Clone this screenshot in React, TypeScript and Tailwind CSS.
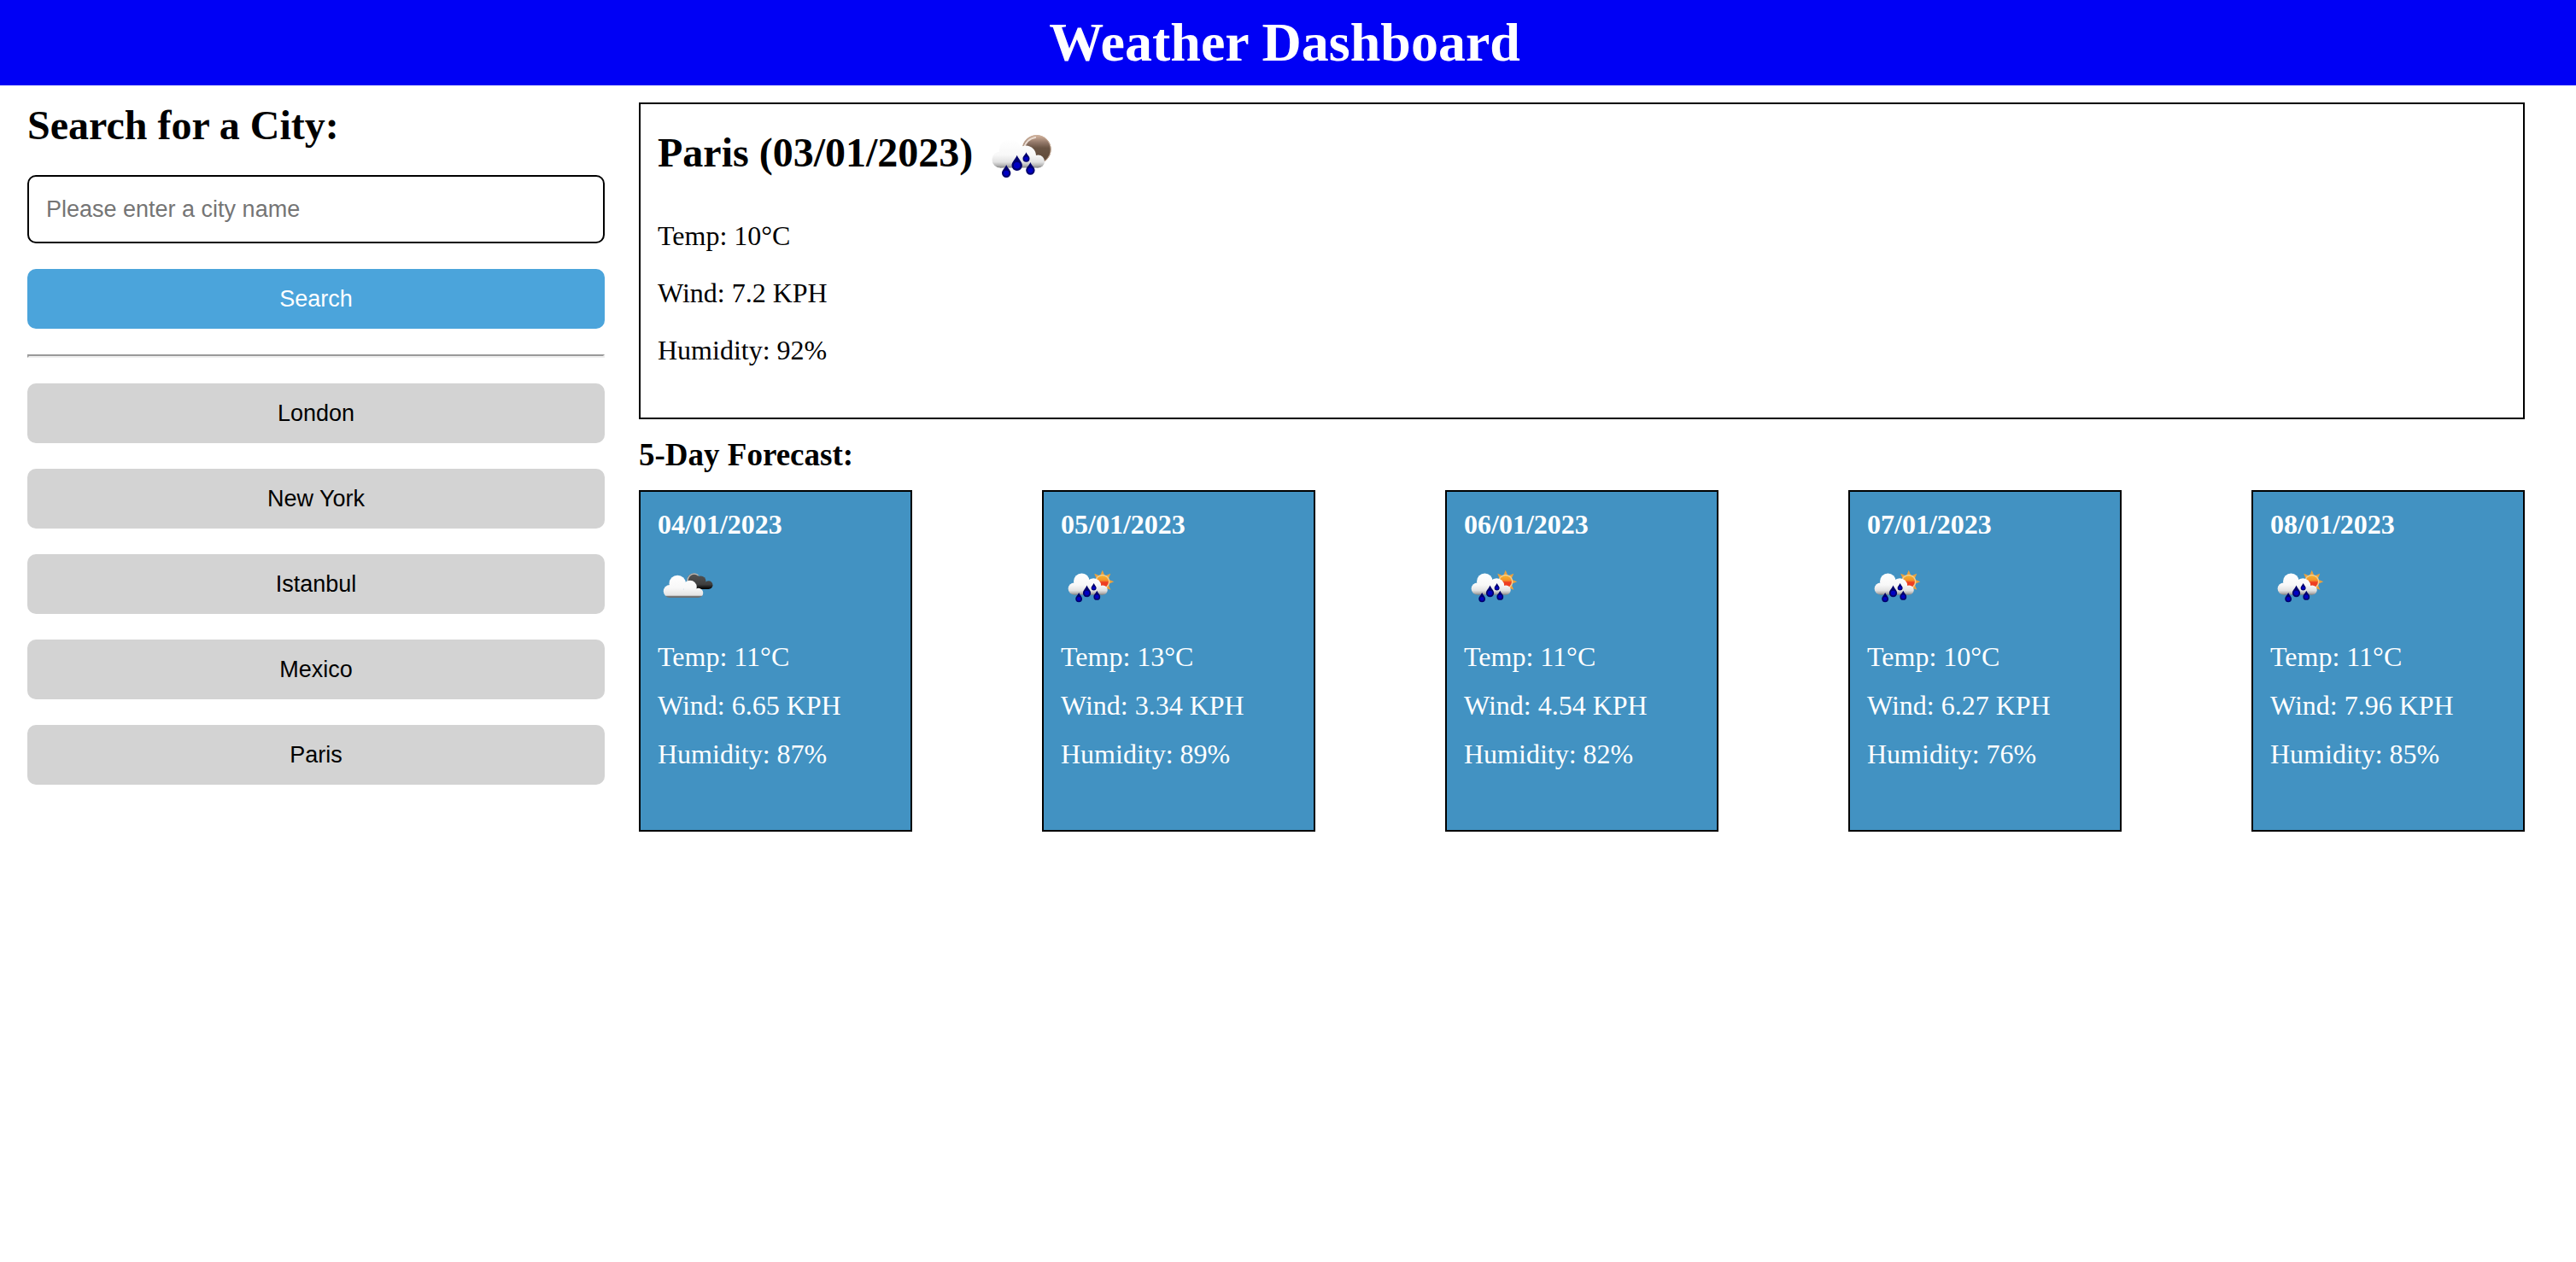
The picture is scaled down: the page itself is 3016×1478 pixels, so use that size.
import React from "react";

type IconKind = "rain-night" | "rain-day" | "clouds";

const HISTORY = ["London", "New York", "Istanbul", "Mexico", "Paris"];

const FORECAST: { date: string; icon: IconKind; temp: string; wind: string; humidity: string }[] = [
  { date: "04/01/2023", icon: "clouds", temp: "11", wind: "6.65", humidity: "87" },
  { date: "05/01/2023", icon: "rain-day", temp: "13", wind: "3.34", humidity: "89" },
  { date: "06/01/2023", icon: "rain-day", temp: "11", wind: "4.54", humidity: "82" },
  { date: "07/01/2023", icon: "rain-day", temp: "10", wind: "6.27", humidity: "76" },
  { date: "08/01/2023", icon: "rain-day", temp: "11", wind: "7.96", humidity: "85" },
];

function Drop({ x, top, bottom, r }: { x: number; top: number; bottom: number; r: number }) {
  const cy = bottom - r;
  const d = `M${x} ${top}C${x + r * 0.3} ${top + r * 0.8} ${x + r} ${cy - r * 0.7} ${x + r} ${cy}A${r} ${r} 0 0 1 ${x - r} ${cy}C${x - r} ${cy - r * 0.7} ${x - r * 0.3} ${top + r * 0.8} ${x} ${top}Z`;
  return (
    <g>
      <path d={d} fill="#00006c" />
      <circle cx={x} cy={cy} r={r * 0.6} fill="#0000c4" />
    </g>
  );
}

function WeatherIcon({ kind, className }: { kind: IconKind; className: string }) {
  const id = React.useId();
  const url = (name: string) => `url(#${id}${name})`;
  const rays = [0, 45, 90, 135, 180, 225, 270, 315];
  return (
    <svg className={className} viewBox={kind === "rain-night" ? "0 0 100 92" : "3 0 100 92"} aria-hidden="true">
      <defs>
        <linearGradient id={`${id}rain`} gradientUnits="userSpaceOnUse" x1="0" y1="30" x2="0" y2="63.5">
          <stop offset="0" stopColor="#ffffff" />
          <stop offset="0.55" stopColor="#f8f8f8" />
          <stop offset="0.8" stopColor="#e2e2e2" />
          <stop offset="0.92" stopColor="#b4b4b4" />
          <stop offset="1" stopColor="#858585" />
        </linearGradient>
        <linearGradient id={`${id}white`} gradientUnits="userSpaceOnUse" x1="0" y1="33" x2="0" y2="68.5">
          <stop offset="0" stopColor="#ffffff" />
          <stop offset="0.55" stopColor="#f8f8f8" />
          <stop offset="0.88" stopColor="#e4e4e4" />
          <stop offset="0.93" stopColor="#777777" />
          <stop offset="1" stopColor="#666666" />
        </linearGradient>
        <linearGradient id={`${id}dark`} gradientUnits="userSpaceOnUse" x1="0" y1="29" x2="0" y2="55">
          <stop offset="0" stopColor="#555555" />
          <stop offset="0.7" stopColor="#3f3f3f" />
          <stop offset="0.9" stopColor="#111111" />
          <stop offset="1" stopColor="#000000" />
        </linearGradient>
        <linearGradient id={`${id}moon`} x1="0" y1="0" x2="0" y2="1">
          <stop offset="0" stopColor="#d5b59e" />
          <stop offset="0.25" stopColor="#94796a" />
          <stop offset="0.45" stopColor="#6a5444" />
          <stop offset="1" stopColor="#5c4737" />
        </linearGradient>
        <linearGradient id={`${id}sun`} x1="0" y1="0" x2="0" y2="1">
          <stop offset="0" stopColor="#f7b52c" />
          <stop offset="0.4" stopColor="#f5902a" />
          <stop offset="0.55" stopColor="#ee3f22" />
          <stop offset="1" stopColor="#ef3b20" />
        </linearGradient>
      </defs>
      {kind === "clouds" && (
        <>
          <g fill={url("dark")}>
            <circle cx="59" cy="39.500" r="9.500" />
            <circle cx="70" cy="42.500" r="8.500" />
            <circle cx="82.500" cy="48.200" r="6.500" />
            <rect x="50" y="44" width="32.500" height="10.700" />
          </g>
          <path d="M49.500 42C50 35.500 54.500 30.500 60 30.500C62.500 30.500 65 31.500 66.500 33.500" fill="none" stroke="#b9b4ae" strokeWidth="2" />
          <g fill={url("white")}>
            <circle cx="34" cy="46" r="13" />
            <circle cx="22" cy="58" r="10" />
            <circle cx="53.500" cy="51.500" r="10.500" />
            <circle cx="66.500" cy="60.500" r="7.500" />
            <rect x="22" y="55" width="44.500" height="13" />
          </g>
        </>
      )}
      {kind === "rain-night" && (
        <>
          <circle cx="66.700" cy="42" r="16.800" fill={url("moon")} />
          <path d="M51.500 42C53 34 58.500 29 66 27.800" fill="none" stroke="#eadbd0" strokeWidth="2" />
          <circle cx="66.700" cy="42" r="16.500" fill="none" stroke="#c9ad98" strokeWidth="1" />
        </>
      )}
      {kind === "rain-day" && (
        <>
          {rays.map((angle) => (
            <path key={angle} d="M64 34.500L68 25L72 34.500Z" fill="#eba13c" transform={`rotate(${angle} 68 43)`} />
          ))}
          <circle cx="68" cy="43" r="11.500" fill="#f3cf94" />
          <circle cx="68" cy="43" r="9.500" fill={url("sun")} />
        </>
      )}
      {kind !== "clouds" && (
        <>
          <g fill={url("rain")}>
            <circle cx="35.500" cy="42.500" r="12.500" />
            <circle cx="24" cy="54" r="9.500" />
            <circle cx="54" cy="49.500" r="12" />
            <circle cx="68.500" cy="56" r="7.500" />
            <rect x="24" y="50" width="44.500" height="13.500" />
          </g>
          <Drop x={43.7} top={48.7} bottom={67} r={6.2} />
          <Drop x={54.5} top={45.3} bottom={56.8} r={4} />
          <Drop x={31.2} top={60} bottom={75} r={5.2} />
          <Drop x={59.4} top={57} bottom={71.8} r={5.2} />
        </>
      )}
    </svg>
  );
}

export default function App() {
  return (
    <div className="min-h-screen bg-white font-['Liberation_Serif',serif] text-[32px] text-black">
      <header className="bg-[#0000f5] py-3 pr-2 text-center text-white">
        <h1 className="text-[64px] leading-[76px] font-bold">Weather Dashboard</h1>
      </header>

      <div className="grid grid-cols-[169fr_552fr] items-start gap-10 pt-5 pr-15 pl-8">
        <aside className="flex flex-col gap-[30px] font-['Liberation_Sans',sans-serif] text-[27px]">
          <form className="flex flex-col gap-[30px]" onSubmit={(e) => e.preventDefault()}>
            <label htmlFor="city" className="pb-0.5 font-['Liberation_Serif',serif] text-[48px] leading-[53px] font-bold">
              Search for a City:
            </label>
            <input
              id="city"
              type="text"
              placeholder="Please enter a city name"
              className="h-20 w-full rounded-[10px] border-2 border-black bg-white px-5 placeholder:text-[#757575]"
            />
            <button type="submit" className="h-[70px] w-full rounded-[10px] bg-[#4ba4db] text-white">
              Search
            </button>
          </form>
          <hr className="border-2 border-t-[#9a9a9a] border-r-[#eeeeee] border-b-[#eeeeee] border-l-[#9a9a9a]" />
          {HISTORY.map((city) => (
            <button key={city} type="button" className="h-[70px] w-full rounded-[10px] bg-[#d3d3d3]">
              {city}
            </button>
          ))}
        </aside>

        <main>
          <section className="border-2 border-black px-5 pt-[11px] pb-[45px]">
            <div className="flex items-center gap-2">
              <h2 className="pb-0.5 text-[48px] leading-[53px] font-bold">Paris (03/01/2023)</h2>
              <WeatherIcon kind="rain-night" className="h-[92px] w-[100px]" />
            </div>
            <div className="mt-[18px] leading-[67px]">
              <p>Temp: 10°C</p>
              <p>Wind: 7.2 KPH</p>
              <p>Humidity: 92%</p>
            </div>
          </section>

          <section>
            <h3 className="text-[37px] leading-[83px] font-bold">5-Day Forecast:</h3>
            <div className="flex justify-between">
              {FORECAST.map((day) => (
                <article key={day.date} className="w-80 border-2 border-black bg-[#4292c2] px-5 pt-5 pb-[60px] text-white">
                  <h4 className="leading-9 font-bold">{day.date}</h4>
                  <WeatherIcon kind={day.icon} className="mt-[17px] mb-[23px] h-[69px] w-[75px]" />
                  <div className="leading-[57px]">
                    <p>Temp: {day.temp}°C</p>
                    <p>Wind: {day.wind} KPH</p>
                    <p>Humidity: {day.humidity}%</p>
                  </div>
                </article>
              ))}
            </div>
          </section>
        </main>
      </div>
    </div>
  );
}
